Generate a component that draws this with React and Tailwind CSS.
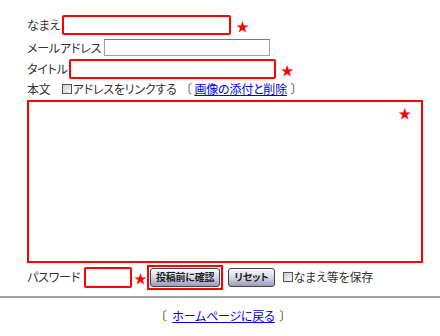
import React from 'react';

const font = { fontFamily: '"Noto Sans CJK JP", "Noto Sans", sans-serif' };

const Star = ({ className = '' }) => (
  <span className={`text-[13px] leading-none text-[#ff0000] ${className}`}>★</span>
);

const Box = () => (
  <span className="inline-block w-[10px] h-[10px] border border-[#555] bg-gradient-to-br from-[#d0d0d0] to-[#f4f4f4] mr-[1px]" />
);

const RedInput = ({ className }) => (
  <div className={`h-[20px] border-2 border-[#ff0000] rounded-[2px] bg-white ${className}`} />
);

const btn =
  'h-[19px] rounded-[3px] border border-[#444] bg-gradient-to-b from-[#fafafe] via-[#d6d6e6] to-[#9c9cbc] text-[10px] font-bold text-[#222] leading-none';

export default function App() {
  return (
    <div
      className="w-[440px] h-[336px] bg-white text-[#333] text-[12px] leading-none tracking-[-0.2px] [font-feature-settings:'palt']"
      style={font}
    >
      <div className="pl-[27px] pt-[15px] flex flex-col">
        {/* name */}
        <div className="flex items-center h-[20px]">
          <span>なまえ</span>
          <RedInput className="ml-[2px] w-[169px]" />
          <Star className="ml-[5px]" />
        </div>
        {/* email */}
        <div className="flex items-center h-[19px] mt-[3px]">
          <span>メールアドレス</span>
          <div className="ml-[3px] w-[166px] h-[17px] border border-[#a0a0a0] border-t-[#7a7a7a] bg-white" />
        </div>
        {/* title */}
        <div className="flex items-center h-[20px] mt-[2px]">
          <span>タイトル</span>
          <RedInput className="ml-[1px] w-[207px] h-[19px]" />
          <Star className="ml-[5px]" />
        </div>
        {/* body label */}
        <div className="flex items-center h-[18px] mt-[1px]">
          <span>本文</span>
          <span className="ml-[11px] flex items-center">
            <Box />
            アドレスをリンクする
          </span>
          <span className="ml-[9px] text-[#555]">〔</span>
          <a className="ml-[3px] text-[#0000ee] underline">画像の添付と削除</a>
          <span className="ml-[4px] text-[#555]">〕</span>
        </div>
        {/* textarea */}
        <div className="relative mt-[2px] w-[396px] h-[163px] border-2 border-[#ff0000] bg-white">
          <Star className="absolute right-[10px] top-[4px] text-[12px]" />
        </div>
        {/* password row */}
        <div className="flex items-center h-[24px] mt-[2px]">
          <span>パスワード</span>
          <RedInput className="ml-[4px] w-[48px] h-[21px]" />
          <Star className="ml-[2px]" />
          <div className="border-2 border-[#ff0000] px-[1px] py-[1px]">
            <button className={`px-[5px] ${btn}`}>投稿前に確認</button>
          </div>
          <button className={`ml-[5px] px-[5px] ${btn}`}>リセット</button>
          <span className="ml-[8px] flex items-center">
            <Box />
            なまえ等を保存
          </span>
        </div>
      </div>
      <div className="mt-[7px] border-t-2 border-[#a0a0a0]" />
      <div className="mt-[12px] flex justify-center items-center pl-[6px]">
        <span className="text-[#555]">〔</span>
        <a className="ml-[6px] text-[#0000ee] underline">ホームページに戻る</a>
        <span className="ml-[5px] text-[#555]">〕</span>
      </div>
    </div>
  );
}
